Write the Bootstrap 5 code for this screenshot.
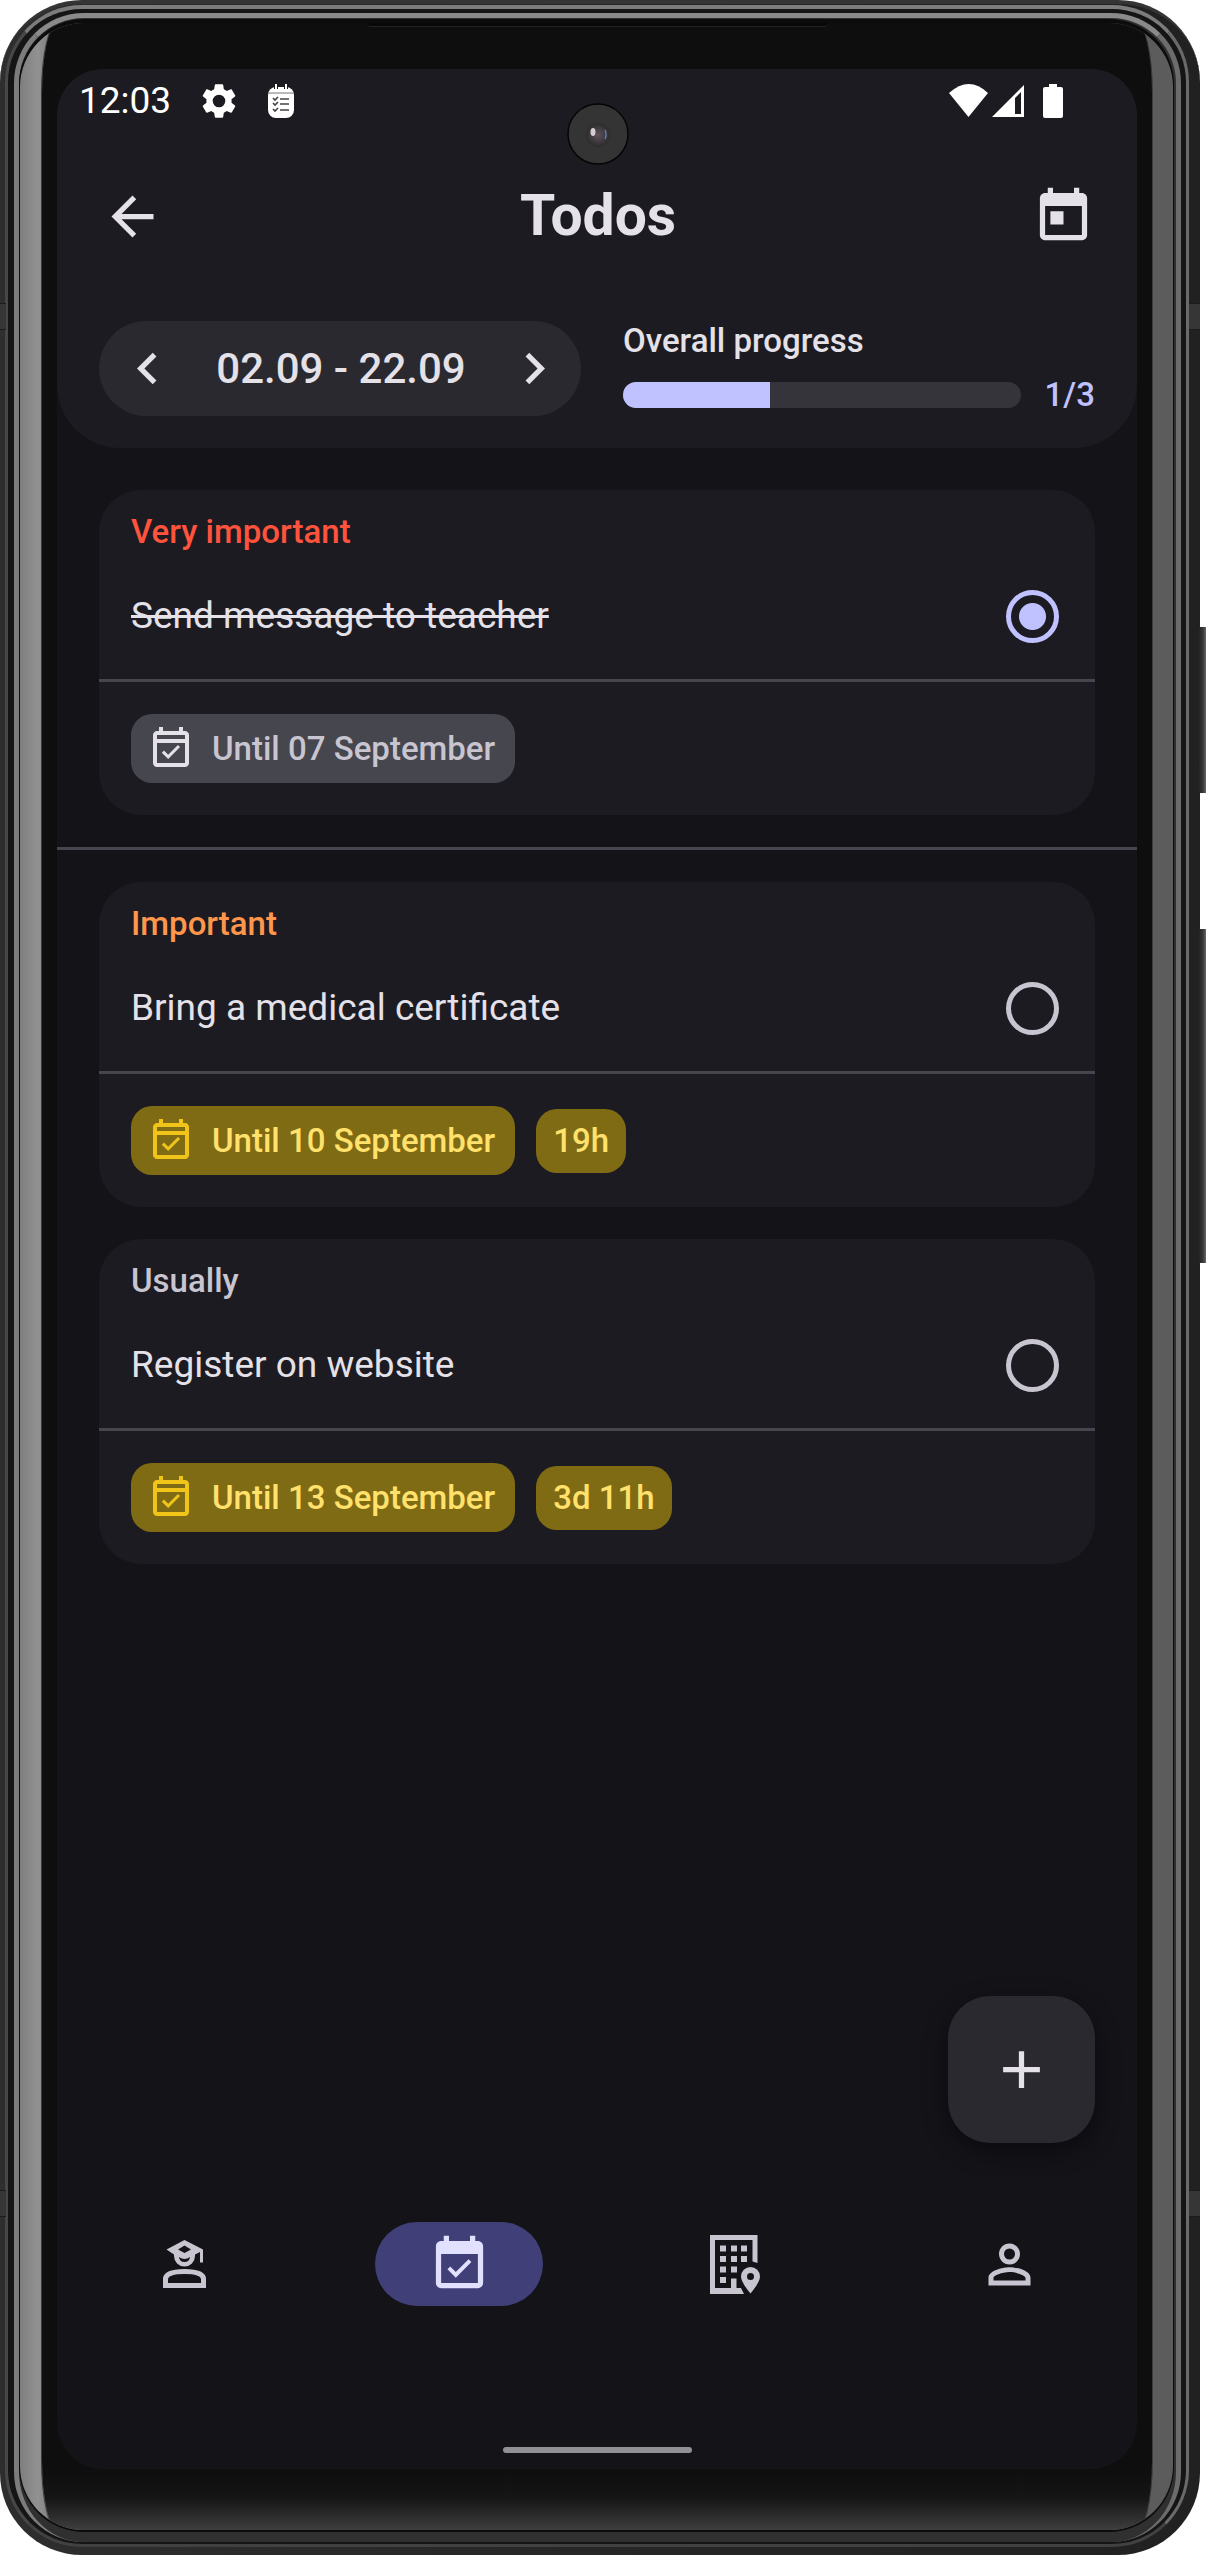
<!DOCTYPE html>
<html lang="en">
<head>
<meta charset="utf-8">
<meta name="viewport" content="width=device-width, initial-scale=1">
<title>Todos</title>
<link href="https://cdn.jsdelivr.net/npm/bootstrap@5.3.0/dist/css/bootstrap.min.css" rel="stylesheet">
<style>
:root{--surface:#131318;--low:#1c1b21;--high:#2a292f;--top:#35343a;--ink:#e4e1e9;--soft:#c8c5d0;--line:#46464f;--accent:#c0c1ff}
body{background:#fff;font-family:Roboto,"Liberation Sans",sans-serif;color:var(--ink)}
/* device body */
.device{min-height:100vh;padding:69px 70px 86px 57px}
.shell,.shell i{position:absolute;display:block}
.shell{inset:0 7px 0 0}
.shell .edge{inset:0;border-radius:82px;background:linear-gradient(90deg,#2e2e2e,#262626 50%,#212121);border-top:4px solid #353535}
.shell .rim{inset:5px 11px 8px 5px;border-radius:77px;background:#151515;border:3px solid;border-width:4px 3px 3px 3px;border-color:#7c7c7c #6a6a6a #414141 #474747}
.shell .band{inset:13px 19px 13px 14px;border-radius:70px;background:#303030;border:5px solid;border-width:5px 5px 0 5px;border-color:#8a8a8a #6c6c6c #303030 #7c7c7c}
.shell .groove{inset:19px 26px 23px 19px;border-radius:65px;background:#0c0c0c}
.shell .wall{inset:23px 27px 25px 20px;border-radius:64px;background:linear-gradient(90deg,#7e7e7e,#929292 18px,#8c8c8c 21px,#5e5e5e 60px,#5c5c5c);overflow:hidden}
.shell .glass{inset:0 21px 0 22px;border-radius:16px/70px;background:linear-gradient(#0e0e0e,#0e0e0e calc(100% - 60px),#151515 calc(100% - 32px),#3e3e3e);box-shadow:0 0 0 1px #3c3c3c}
.shell .key{right:-6px;width:7px;background:linear-gradient(90deg,#242424,#3a3a3a 60%,#6a6a6a)}
.shell .key-a{top:627px;height:166px}
.shell .key-b{top:929px;height:334px}
.shell .joint{width:6px;height:27px;background:#363636;border:solid #1b1b1b;border-width:1px 0}
.shell .joint-l{left:0}.shell .joint-r{right:0;width:11px}
.shell .joint-hi{top:303px}.shell .joint-lo{top:2190px}
.shell .slot{left:367px;right:372px;top:23px;height:4px;background:#080808;border-bottom:1px solid #242424;border-radius:0 0 6px 6px}
.lens{left:567px;top:103px;width:62px;height:62px}
/* screen */
.screen{min-height:calc(100vh - 155px);background:var(--surface);border-radius:46px;overflow:hidden}
.head{background:var(--low);border-radius:0 0 63px 63px;padding-bottom:32px}
.status{height:64px;padding:0 74px 0 22px;font-size:37px;line-height:44px;color:#fff;gap:27px}
.appbar{height:166px;padding:0 42px 0 44px;margin-bottom:21px}
.appbar h1{font-size:57px;line-height:70px;font-weight:700}
.icon-btn{border:0;background:none;padding:0;color:inherit;line-height:0}
.icon-btn svg,.tab svg{width:63px;height:63px;fill:currentColor}
.tools{padding:0 42px;gap:42px}
.range{width:482px;height:95px;border-radius:48px;background:var(--high);padding:0 15px 0 17px;font-size:42px;line-height:63px;font-weight:500}
.tag-text{font-size:33px;line-height:42px;font-weight:500}
.progress{height:26px;border-radius:13px;background:var(--top)}
.progress-bar{background:var(--accent)}
.count{color:var(--accent)}
.meter{gap:12px}.meter-row{gap:24px}
.list{padding:42px 42px 32px;gap:32px}
.split{height:3px;margin:0 -42px;background:var(--line)}
.todo{background:var(--low);border-radius:42px}
.todo-top{padding:21px 36px 0 32px;border-bottom:3px solid var(--line)}
.todo-row{height:126px;font-size:37px;line-height:44px}
.todo-foot{padding:32px;gap:21px}
.urgent{color:#ff533d}.important{color:#ff964b}.usual{color:var(--soft)}
.done{text-decoration:line-through;text-decoration-thickness:3px}
.form-check-input{width:53px;height:53px;margin:0;border:5px solid var(--soft);background-color:transparent;flex:none}
.form-check-input[type=radio]:checked{border-color:var(--accent);background:radial-gradient(circle,var(--accent) 13px,transparent 14px) center/43px 43px no-repeat}
.chip{height:69px;border-radius:21px;padding:0 20px 0 16px;gap:17px;background:var(--line);color:var(--soft)}
.chip svg{width:48px;height:48px;fill:var(--ink)}
.chip-due{background:#806b15;color:#ffe16c}
.chip-due svg{fill:#f0c419}
.chip-left{height:64px;padding:0 17px}
.fab{width:147px;height:147px;border-radius:42px;background:var(--high);margin:0 42px 79px 0;box-shadow:0 8px 24px #0006}
.tabs{gap:21px;margin-bottom:141px}
.tab{color:var(--soft)}
.tab span{width:168px;height:84px;border-radius:42px}
.tab.active span{background:#403f77;color:#e1e0ff}
.tab .place{width:50px;height:59px}
.tab .student{width:43px;height:48px}
.home{width:189px;height:6px;border-radius:3px;background:#919094;margin-bottom:16px}
</style>
</head>
<body>
<svg class="d-none" aria-hidden="true">
  <symbol id="due" viewBox="0 0 24 24"><path d="M16.53 11.06 15.47 10l-4.88 4.88-2.12-2.12-1.06 1.06L10.59 17zM19 3h-1V1h-2v2H8V1H6v2H5c-1.11 0-1.99.9-1.99 2L3 19c0 1.1.89 2 2 2h14c1.1 0 2-.9 2-2V5c0-1.1-.9-2-2-2zm0 16H5V9h14zM5 7V5h14v2z"/></symbol>
</svg>
<div class="device position-relative">
  <div class="shell" aria-hidden="true">
    <i class="edge"></i>
    <i class="key key-a"></i><i class="key key-b"></i>
    <i class="rim"></i><i class="band"></i><i class="groove"></i>
    <i class="wall"><i class="glass"></i></i>
    <i class="slot"></i>
    <i class="joint joint-l joint-hi"></i><i class="joint joint-r joint-hi"></i>
    <i class="joint joint-l joint-lo"></i><i class="joint joint-r joint-lo"></i>
  </div>
  <div class="screen position-relative d-flex flex-column">
    <header class="head">
      <div class="status d-flex align-items-center">
        <span>12:03</span>
        <svg width="42" height="42" viewBox="0 0 24 24" fill="#fff"><path d="M19.14 12.94c.04-.3.06-.61.06-.94 0-.32-.02-.64-.07-.94l2.03-1.58c.18-.14.23-.41.12-.61l-1.92-3.32c-.12-.22-.37-.29-.59-.22l-2.39.96c-.5-.38-1.03-.7-1.62-.94l-.36-2.54c-.04-.24-.24-.41-.48-.41h-3.84c-.24 0-.43.17-.47.41l-.36 2.54c-.59.24-1.13.57-1.62.94l-2.39-.96c-.22-.08-.47 0-.59.22L2.74 8.87c-.12.21-.08.47.12.61l2.03 1.58c-.05.3-.09.63-.09.94s.02.64.07.94l-2.03 1.58c-.18.14-.23.41-.12.61l1.92 3.32c.12.22.37.29.59.22l2.39-.96c.5.38 1.03.7 1.62.94l.36 2.54c.05.24.24.41.48.41h3.84c.24 0 .44-.17.47-.41l.36-2.54c.59-.24 1.13-.56 1.62-.94l2.39.96c.22.08.47 0 .59-.22l1.92-3.32c.12-.22.07-.47-.12-.61zM12 15.6A3.6 3.6 0 1 1 12 8.4a3.6 3.6 0 0 1 0 7.2z"/></svg>
        <svg width="28" height="34" viewBox="0 0 28 34"><rect x="1" y="3" width="26" height="31" rx="8" fill="#fff"/><path d="M1 9h26" stroke="#777" stroke-width="1"/><path d="M9 0v5M19 0v5" stroke="#1c1b21" stroke-width="4"/><path d="M9 0v5M19 0v5" stroke="#fff" stroke-width="2"/><path d="M13 15h9M13 20h9M13 26h9" stroke="#444" stroke-width="1.6"/><path d="m6 14 2 2 3-3M6 19l2 2 3-3M6 25l2 2 3-3" fill="none" stroke="#444" stroke-width="1.6"/></svg>
        <svg class="ms-auto" width="114" height="34" viewBox="0 0 114 34" fill="#fff"><path d="M0 9Q20-9 39 9L19.500 33z"/><path fill-rule="evenodd" d="M43 33 75 1v32zM66 14v16h6V8z"/><path d="M94 5q0-2 2-2h4V0h8v3h4q2 0 2 2v27q0 2-2 2H96q-2 0-2-2z"/></svg>
      </div>
      <div class="appbar d-flex align-items-center justify-content-between">
        <button class="icon-btn" type="button" aria-label="Back"><svg viewBox="0 0 24 24"><path d="M20 11H7.830l5.590-5.590L12 4l-8 8 8 8 1.410-1.410L7.830 13H20z"/></svg></button>
        <h1 class="m-0">Todos</h1>
        <button class="icon-btn" type="button" aria-label="Today"><svg viewBox="0 0 24 24"><path d="M19 3h-1V1h-2v2H8V1H6v2H5c-1.110 0-1.990.9-1.990 2L3 19c0 1.100.890 2 2 2h14c1.100 0 2-.9 2-2V5c0-1.100-.9-2-2-2zm0 16H5V8h14zM7 10h5v5H7z"/></svg></button>
      </div>
      <div class="tools d-flex align-items-center">
        <div class="range d-flex align-items-center justify-content-between">
          <button class="icon-btn" type="button" aria-label="Previous period"><svg viewBox="0 0 24 24"><path d="M15.410 7.410 14 6l-6 6 6 6 1.410-1.410L10.830 12z"/></svg></button>
          <span>02.09 - 22.09</span>
          <button class="icon-btn" type="button" aria-label="Next period"><svg viewBox="0 0 24 24"><path d="M10 6 8.590 7.410 13.170 12l-4.580 4.590L10 18l6-6z"/></svg></button>
        </div>
        <div class="meter tag-text flex-fill d-flex flex-column">
          <span>Overall progress</span>
          <div class="meter-row d-flex align-items-center">
            <div class="progress flex-fill" role="progressbar" aria-label="Overall progress" aria-valuenow="1" aria-valuemin="0" aria-valuemax="3"><div class="progress-bar" style="width:37%"></div></div>
            <span class="count">1/3</span>
          </div>
        </div>
      </div>
    </header>

    <main class="list d-flex flex-column">
      <article class="todo">
        <div class="todo-top">
          <div class="tag-text urgent">Very important</div>
          <div class="todo-row d-flex align-items-center justify-content-between">
            <label class="done" for="t1">Send message to teacher</label>
            <input class="form-check-input" type="radio" id="t1" name="t1" checked>
          </div>
        </div>
        <div class="todo-foot d-flex align-items-center">
          <span class="chip tag-text d-flex align-items-center"><svg><use href="#due"/></svg>Until 07 September</span>
        </div>
      </article>
      <div class="split"></div>
      <article class="todo">
        <div class="todo-top">
          <div class="tag-text important">Important</div>
          <div class="todo-row d-flex align-items-center justify-content-between">
            <label for="t2">Bring a medical certificate</label>
            <input class="form-check-input" type="radio" id="t2" name="t2">
          </div>
        </div>
        <div class="todo-foot d-flex align-items-center">
          <span class="chip chip-due tag-text d-flex align-items-center"><svg><use href="#due"/></svg>Until 10 September</span>
          <span class="chip chip-due chip-left tag-text d-flex align-items-center">19h</span>
        </div>
      </article>
      <article class="todo">
        <div class="todo-top">
          <div class="tag-text usual">Usually</div>
          <div class="todo-row d-flex align-items-center justify-content-between">
            <label for="t3">Register on website</label>
            <input class="form-check-input" type="radio" id="t3" name="t3">
          </div>
        </div>
        <div class="todo-foot d-flex align-items-center">
          <span class="chip chip-due tag-text d-flex align-items-center"><svg><use href="#due"/></svg>Until 13 September</span>
          <span class="chip chip-due chip-left tag-text d-flex align-items-center">3d 11h</span>
        </div>
      </article>
    </main>

    <button class="fab icon-btn mt-auto align-self-end" type="button" aria-label="Add todo"><svg viewBox="0 0 24 24"><path d="M19 13h-6v6h-2v-6H5v-2h6V5h2v6h6z"/></svg></button>
    <nav class="tabs d-flex" aria-label="Main">
      <a class="tab flex-fill d-flex justify-content-center" href="#" aria-label="Student"><span class="d-flex align-items-center justify-content-center"><svg class="student" viewBox="0 0 43 48"><path fill-rule="evenodd" d="M21.500 0 40 9.500V22.500H37V12L32 14.500V16A10.500 10.500 0 0 1 11 16V14.500L3.500 9.500ZM21.500 5.500 15 9.500 21.500 13 28 9.500ZM16 17Q21.500 21 27 17 26.500 22 21.500 22 16.500 22 16 17Z"/><path fill-rule="evenodd" d="M0 48V39Q0 29 21.500 29 43 29 43 39V48ZM5 43H38V39.500Q38 34 21.500 34 5 34 5 39.500Z"/></svg></span></a>
      <a class="tab active flex-fill d-flex justify-content-center" href="#" aria-label="Todos" aria-current="page"><span class="d-flex align-items-center justify-content-center"><svg viewBox="0 0 24 24"><path d="M16.530 11.060 15.470 10l-4.880 4.880-2.120-2.120-1.060 1.060L10.590 17zM19 3h-1V1h-2v2H8V1H6v2H5c-1.110 0-1.990.9-1.990 2L3 19c0 1.100.890 2 2 2h14c1.100 0 2-.9 2-2V5c0-1.100-.9-2-2-2zm0 16H5V8h14z"/></svg></span></a>
      <a class="tab flex-fill d-flex justify-content-center" href="#" aria-label="Campus"><span class="d-flex align-items-center justify-content-center"><svg class="place" viewBox="0 0 50 59"><path d="M0 0H47.500V28L42.500 26.500V5H5V53H21V43.500H26.500V53H31L34 59H0Z"/><path d="M10 10.500h6v6h-6zM21 10.500h6v6h-6zM31 10.500h6v6h-6zM10 21h6v6h-6zM21 21h6v6h-6zM31 21h6v6h-6zM10 31.500h6v6h-6zM21 31.500h6v6h-6zM10 42h6v6h-6z"/><path fill-rule="evenodd" d="M40.500 58.500Q31 47 31 41.500A9.500 9.500 0 0 1 50 41.500Q50 47 40.500 58.500ZM40.500 38A3.500 3.500 0 1 0 40.500 45 3.500 3.500 0 0 0 40.500 38Z"/></svg></span></a>
      <a class="tab flex-fill d-flex justify-content-center" href="#" aria-label="Profile"><span class="d-flex align-items-center justify-content-center"><svg viewBox="0 0 24 24"><path fill-rule="evenodd" d="M12 5.900a2.100 2.100 0 1 1 0 4.200 2.100 2.100 0 0 1 0-4.200m0 9c2.970 0 6.100 1.460 6.100 2.100v1.100H5.900V17c0-.640 3.130-2.100 6.100-2.100M12 4C9.790 4 8 5.790 8 8s1.790 4 4 4 4-1.790 4-4-1.790-4-4-4m0 9c-2.670 0-8 1.340-8 4v3h16v-3c0-2.660-5.330-4-8-4"/></svg></span></a>
    </nav>
    <div class="home mx-auto"></div>
  </div>
  <svg class="lens position-absolute" viewBox="0 0 62 62" aria-hidden="true"><defs><radialGradient id="lg"><stop offset="0" stop-color="#5d545c"/><stop offset=".6" stop-color="#403a40"/><stop offset="1" stop-color="#2c2c2c"/></radialGradient></defs><circle cx="31" cy="31" r="30" fill="#343434" stroke="#050505" stroke-width="1.500"/><circle cx="31" cy="32" r="12" fill="url(#lg)"/><ellipse cx="26" cy="29" rx="2.500" ry="4" fill="#d8ccd2"/><path d="M38 27q2 5 0 9" fill="none" stroke="#5f7ba8" stroke-width="1.500"/></svg>
</div>
<script src="https://cdn.jsdelivr.net/npm/bootstrap@5.3.0/dist/js/bootstrap.bundle.min.js"></script>
</body>
</html>
